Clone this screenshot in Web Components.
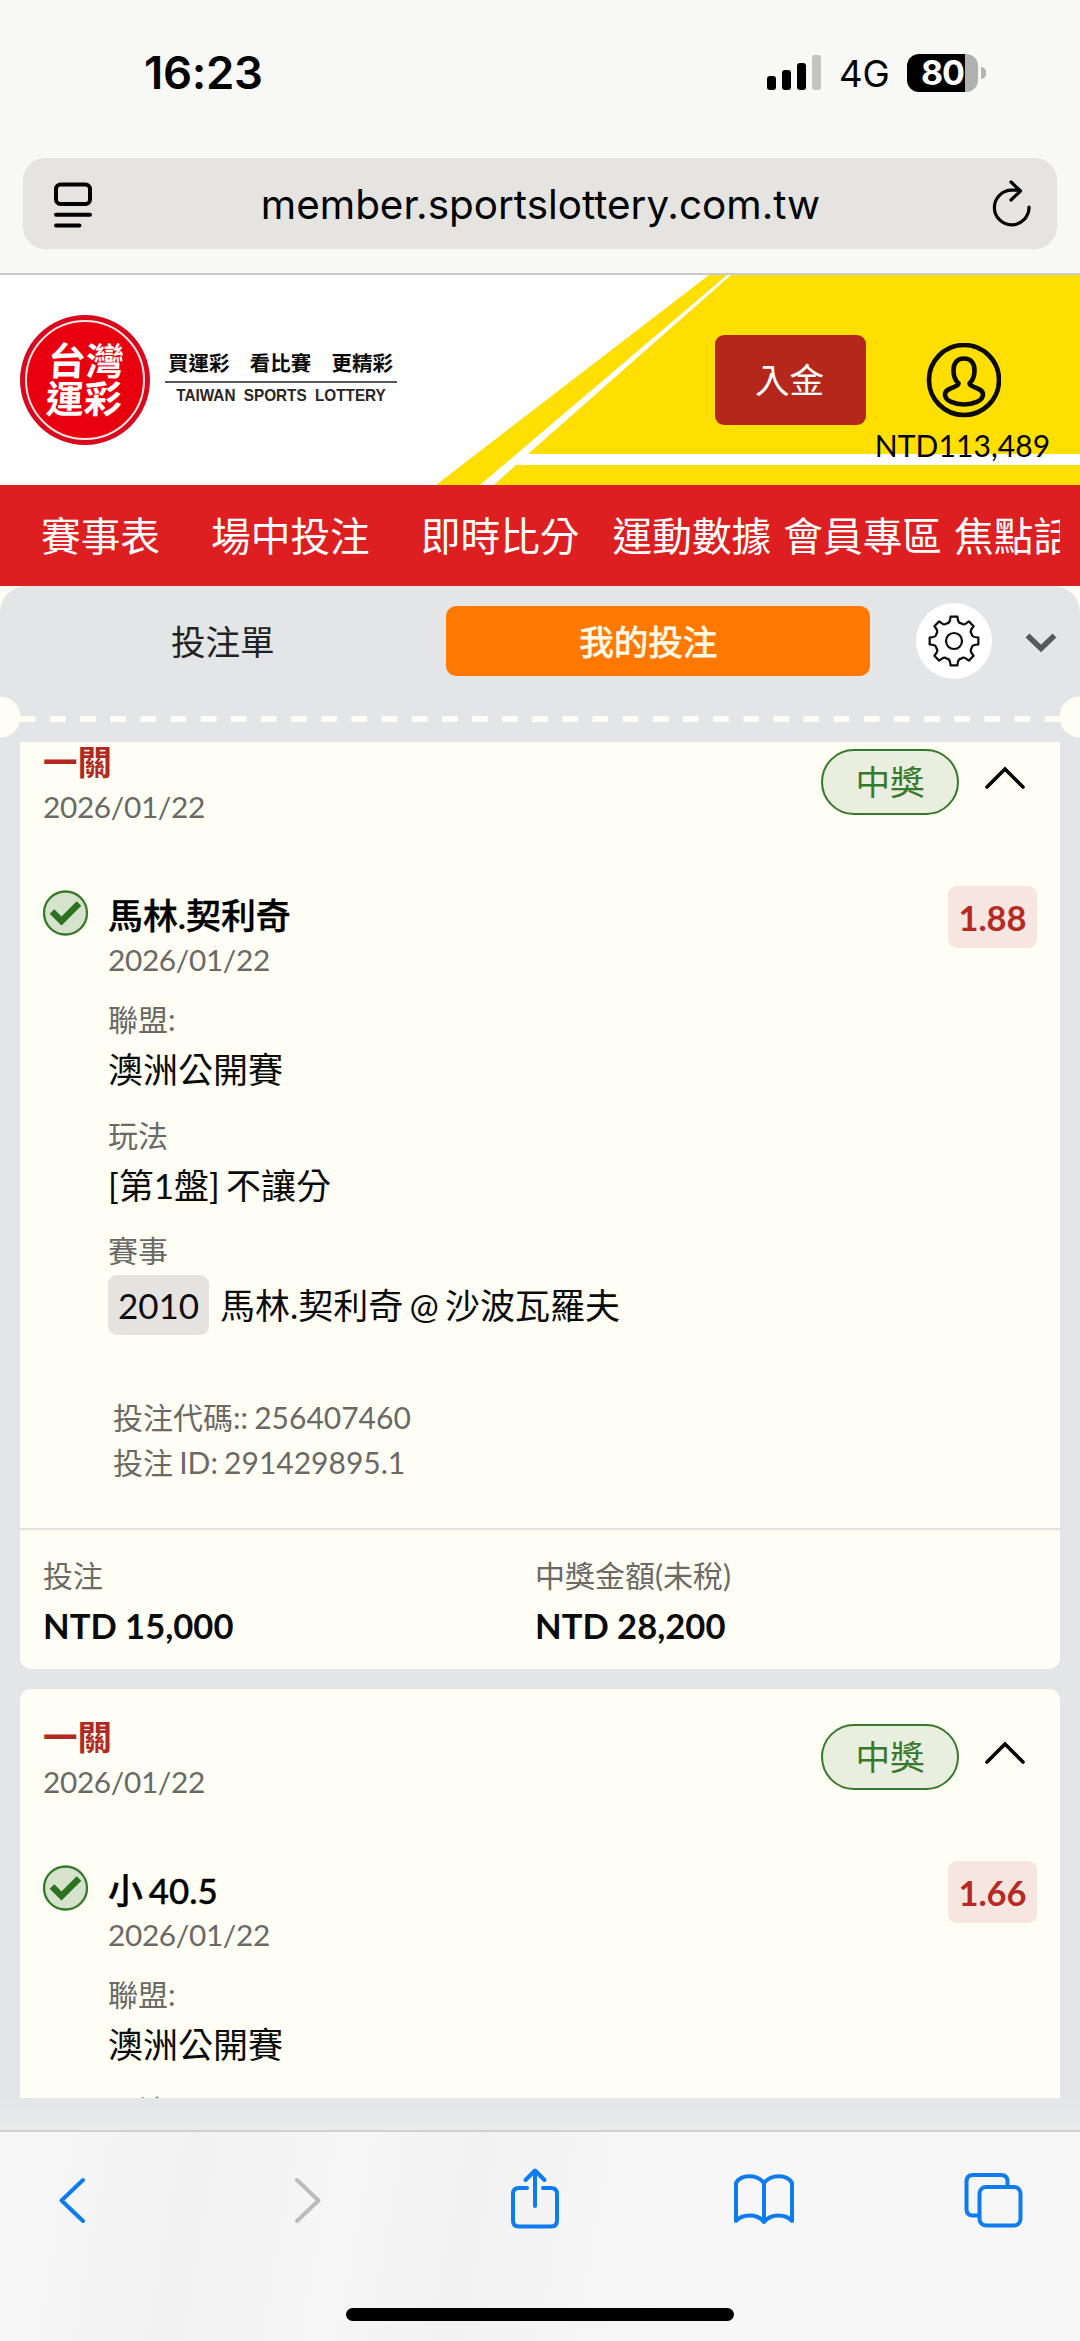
<!DOCTYPE html>
<html lang="zh-Hant">
<head>
<meta charset="utf-8">
<title>台灣運彩</title>
<style>
body{margin:0;width:1080px;height:2341px;overflow:hidden;background:#fffef5;font-family:Lato,"Noto Sans CJK TC",sans-serif;color:#0b0b0b}
</style>
</head>
<body>
<sports-app></sports-app>
<script>
const define=(name,html,setup)=>customElements.define(name,class extends HTMLElement{
  constructor(){
    super();
    const t=document.createElement('template');
    t.innerHTML='<style>:host{display:block;box-sizing:border-box}*{box-sizing:border-box}svg{display:block;flex:none}</style>'+html;
    this.attachShadow({mode:'open'}).append(t.content.cloneNode(true));
    if(setup)setup(this,this.shadowRoot);
  }
});

define('status-bar',`
<style>
:host{height:158px;background:#f8f8f6;font-family:Inter,sans-serif;color:#000}
.row{display:flex;align-items:center;height:145px;padding:0 94px 0 144px}
.time{font-size:45.5px;font-weight:600;letter-spacing:-.3px;flex:1}
.net{font-size:36.5px;margin:2px 18px 0 18px;letter-spacing:0;width:50px;white-space:nowrap}
.bat{display:flex;align-items:center;gap:3px}
.cell{width:71px;height:38px;border-radius:12px;background:linear-gradient(90deg,#000 58px,#b0b0af 58px);color:#fff;font-weight:700;font-size:34px;line-height:38px;text-align:center;letter-spacing:-1px}
.tip{width:5px;height:12px;border-radius:0 5px 5px 0;background:#b4b4b3}
</style>
<div class="row"><span class="time">16:23</span>
<svg width="54" height="35" viewBox="0 0 54 35"><g fill="#000"><rect y="21" width="9" height="14" rx="3"/><rect x="15" y="15" width="9" height="20" rx="3"/><rect x="30" y="8" width="9" height="27" rx="3"/></g><rect x="45" width="9" height="35" rx="3" fill="#c4c4c2"/></svg>
<span class="net">4G</span><span class="bat"><span class="cell">80</span><span class="tip"></span></span></div>`);

define('url-bar',`
<style>
:host{height:117px;background:#f8f8f6;padding:0 23px;border-bottom:2px solid #c9c9cb;font-family:Inter,sans-serif;color:#000}
.box{height:91px;border-radius:22px;background:#e5e4e0;display:flex;align-items:center;justify-content:space-between;padding:0 24px 0 30px}
.url{font-size:40.4px;white-space:nowrap;margin:2px 3px 0 0}
</style>
<div class="box">
<svg width="40" height="48" viewBox="0 0 40 48" fill="none" stroke="#000" stroke-width="4" stroke-linecap="round"><rect x="3" y="4.500" width="34" height="19.500" rx="4.500"/><path d="M3 34.800H37M3 45.500H26.500"/></svg>
<span class="url"><slot></slot></span>
<svg width="42" height="50" viewBox="0 0 42 50" fill="none" stroke="#000" stroke-width="3.2" stroke-linecap="round" stroke-linejoin="round"><path d="M38 28A17.3 17.3 0 1 1 20.7 11.2H28M20 3L29.5 12L20 21"/></svg>
</div>`);

define('brand-logo',`
<style>
:host{display:flex;align-items:center;gap:15px}
.seal{width:130px;height:130px;border-radius:50%;background:#d8091d;padding:5px}
.ring{height:120px;border-radius:50%;border:2px solid #ffe5e5;background:#e8000f;display:flex;align-items:center;justify-content:center;color:#fff;font:700 38px/38px "Noto Sans CJK TC",sans-serif}
.ring span{transform:skewX(-3deg);display:block;text-align:center;white-space:pre;margin-top:-4px}
.tag{width:232px;display:flex;flex-direction:column;margin-top:-6px}
.zh{font:700 20.5px/27px "Noto Sans CJK TC",sans-serif;display:flex;justify-content:space-between;padding:0 4px 0 3px;height:34px;border-bottom:2px solid #555;white-space:nowrap}
.en{font:700 17px/20px "Liberation Sans",sans-serif;text-align:center;margin:3px -10px 0;color:#2b2523;word-spacing:4.5px;white-space:nowrap;transform:scaleX(.9)}
</style>
<div class="seal"><div class="ring"><span>台灣
運彩</span></div></div>
<div class="tag"><div class="zh"><span>買運彩</span><span>看比賽</span><span>更精彩</span></div><div class="en">TAIWAN SPORTS LOTTERY</div></div>`);

define('site-header',`
<style>
:host{height:210px;background:#fff;position:relative}
.bg{position:absolute;inset:0}
.row{position:relative;display:flex;height:210px;align-items:flex-start;justify-content:space-between;padding:40px 31px 0 20px}
.right{display:flex;align-items:flex-start;padding-top:20px}
.pay{width:151px;height:90px;border-radius:9px;background:#b5271a;color:#fff;font-size:34.600px;line-height:90px;text-align:center;padding-right:2px}
.user{width:174px;margin-left:9px;display:flex;flex-direction:column;align-items:center;padding:8px 0 0 1px}
.bal{font-size:30px;line-height:40px;white-space:nowrap;color:#000;margin-top:6px;letter-spacing:.1px}
</style>
<svg class="bg" width="1080" height="210" viewBox="0 0 1080 210"><path d="M709 0H1080V210H436Z" fill="#fedf00"/><path d="M727 0H731L528 179H1080V190H516L494 210H480Z" fill="#fff"/></svg>
<div class="row"><brand-logo></brand-logo><div class="right"><div class="pay">入金</div><div class="user">
<svg width="76" height="76" viewBox="0 0 76 76" fill="none" stroke="#0a0a00" stroke-width="4.6" stroke-linejoin="round"><circle cx="39" cy="37" r="35"/><path transform="translate(1)" d="M38 15.500C31 15.500 27.500 20 27.500 27.500C27.500 33 29 37 32.500 40.500C32.500 44.500 19 44.500 19 51.500C19 58 29 61.500 38 61.500C47 61.500 57 58 57 51.500C57 44.500 43.500 44.500 43.500 40.500C47 37 48.500 33 48.500 27.500C48.500 20 45 15.500 38 15.500Z"/></svg>
<div class="bal">NTD113,489</div></div></div></div>`);

define('main-nav',`
<style>
:host{height:101px;background:#de1f21;padding:0 20px}
nav{display:flex;height:101px;align-items:center;overflow:hidden;padding:0 0 4px 21px;white-space:nowrap;font-size:39.7px;color:#fff}
span{flex:none;margin-right:51px}
.t{margin-right:12px}
.m{margin-right:33px}
</style>
<nav><span>賽事表</span><span>場中投注</span><span class="m">即時比分</span><span class="t">運動數據</span><span class="t">會員專區</span><span>焦點話題</span></nav>`);

define('bet-tabs',`
<style>
:host{height:156px;background:#e4e5e7;border-radius:26px 26px 0 0}
.row{display:flex;height:110px;padding:20px 22px 0 0;align-items:flex-start}
.tab{width:446px;height:70px;line-height:71px;font-size:34.6px;text-align:center;color:#222}
.on{width:425px;border-radius:10px;background:#ff7800;color:#fffbe9;padding-right:19px;-webkit-text-stroke:.8px #fffbe9}
.gear{width:76px;height:76px;border-radius:50%;background:#fff;margin:-3px 32px 0 46px;display:flex;align-items:center;justify-content:center}
.chev{margin-top:22px}
</style>
<div class="row"><div class="tab">投注單</div><div class="tab on">我的投注</div>
<div class="gear"><svg width="56" height="56" viewBox="-28 -28 56 56" fill="none" stroke="#0c0c0c" stroke-width="2.200" stroke-linejoin="round"><path/><circle r="8"/></svg></div>
<svg class="chev" width="34" height="28" viewBox="0 0 34 28" fill="none" stroke="#58595b" stroke-width="5.500"><path d="M3.500 7.500L17 20.500L30.500 7.500"/></svg></div>
<svg width="1080" height="46" viewBox="0 0 1080 46"><g fill="#fffef5"><circle cx="0" cy="21" r="20.500"/><circle cx="1080" cy="21" r="20.500"/></g><path d="M20 23H1061" stroke="#fffef5" stroke-width="6" stroke-dasharray="15.500 14.640"/></svg>`,(h,r)=>{
  const p=(rad,deg)=>{const a=deg*Math.PI/180;return (rad*Math.cos(a)).toFixed(2)+' '+(rad*Math.sin(a)).toFixed(2)};
  let d='';
  for(let i=0;i<8;i++){
    const c=i*45;
    d+=(i?'L':'M')+p(24.6,c-8)+'L'+p(24.6,c+8)+'L'+p(21,c+11)+'Q'+p(18.4,c+15)+' '+p(19,c+22.5)+'Q'+p(18.4,c+30)+' '+p(21,c+34);
  }
  r.querySelector('path').setAttribute('d',d+'Z');
});

define('bet-field',`
<style>
:host{margin-bottom:17.5px}
.l{font-size:30px;line-height:39px;height:40px;color:#6a6966}
.v{font-size:35px;line-height:58px;color:#0b0b0b;white-space:nowrap;word-spacing:-2.700px}
</style><div class="l"><slot name="label"></slot></div><div class="v"><slot></slot></div>`);

define('match-code',`
<style>:host{display:inline-block;height:60px;line-height:61px;width:101px;text-align:center;border-radius:9px;background:#e5e2df;margin:4px 11px 0 0}</style><slot></slot>`);

define('bet-total',`
<style>
:host{width:492px}
.fl{font-size:30px;line-height:45px;color:#6a6966}
.fv{font-size:34.600px;line-height:56px;font-weight:700;white-space:nowrap}
</style><div class="fl"><slot name="label"></slot></div><div class="fv"><slot></slot></div>`);

define('bet-card',`
<style>
:host{height:955px;border-radius:11px;background:#fffef5;flex:none}
.head{display:flex;height:179px;padding:26px 34px 0 23px}
.hd{flex:1}
.kind{font-size:34.500px;line-height:44px;font-weight:700;color:#b02a22}
.date{font-size:29.8px;line-height:45px;color:#6a6966;letter-spacing:-.33px}
.badge{width:138px;height:66px;border:2.5px solid #37792a;border-radius:33px;background:#e9eedf;color:#37792a;font-size:34.6px;line-height:61px;text-align:center;margin:9px 25px 0 0}
.up{margin-top:25px}
.leg{display:flex;padding:0 23px;height:637px;border-bottom:2px solid #e4e2dd;align-items:flex-start}
.ok{margin:-3px 19px 0 0}
.body{flex:1}
.title{font-size:34.900px;line-height:45px;height:44px;font-weight:500;white-space:nowrap;word-spacing:-3px;color:#000;-webkit-text-stroke:.4px #000}
.body .date{margin-bottom:18px}
.odds{width:89px;height:62px;border-radius:9px;background:#f6e6df;color:#b52a24;font-weight:700;font-size:34.500px;line-height:64px;text-align:center;margin-top:-7px}
.codes{font-size:30px;line-height:45px;color:#6a6966;padding:42px 0 0 5px;word-spacing:-1.500px}
.foot{display:flex;padding:23px 23px 0}
</style>
<div class="head"><div class="hd"><div class="kind">一關</div><div class="date">2026/01/22</div></div><div class="badge">中獎</div>
<svg class="up" width="42" height="26" viewBox="0 0 42 26" fill="none" stroke="#000" stroke-width="3.600" stroke-linecap="round"><path d="M3 22L21 4L39 22"/></svg></div>
<div class="leg">
<svg class="ok" width="46" height="46" viewBox="0 0 46 46" fill="none"><circle cx="22.500" cy="23" r="21.500" fill="#d5e2cc" stroke="#37792a" stroke-width="2.300"/><path d="M9 21.500L18.500 31L36 13.500" stroke="#2c7120" stroke-width="6.500"/></svg>
<div class="body"><div class="title"><slot name="title"></slot></div><div class="date">2026/01/22</div><slot></slot><div class="codes"><slot name="codes"></slot></div></div>
<div class="odds"><slot name="odds"></slot></div></div>
<div class="foot"><slot name="total"></slot></div>`);

define('bet-list',`
<style>
:host{height:1390px;background:linear-gradient(#e4e5e7 1355px,#eaebeb);padding:0 20px;border-bottom:2px solid #cfcfd0}
.view{height:1356px;overflow:hidden}
.scroll{display:flex;flex-direction:column;gap:20px;margin-top:-28px}
</style><div class="view"><div class="scroll"><slot></slot></div></div>`);

define('browser-toolbar',`
<style>
:host{height:209px;background:linear-gradient(100deg,#f6f6f6 5%,#f2f2f2 18%,#f6f6f6 32%,#f2f2f2 43%,#f7f7f7 60%,#f6f6f6);display:flex;flex-direction:column;align-items:center;justify-content:space-between;padding:34px 0 20px}
.row{width:100%;display:flex;align-items:center;padding-left:56px;color:#0f7bf0}
.home{width:388px;height:13px;border-radius:7px;background:#000}
svg{fill:none;stroke:currentColor;stroke-width:4;stroke-linecap:round;stroke-linejoin:round}
.fw{color:#bcbcbc;margin-left:206px}
.sh{margin-left:188px}
.bk{margin-left:173px}
.tb{margin-left:168px}
</style>
<div class="row">
<svg width="30" height="66" viewBox="0 0 30 66"><path d="M27 14L5.500 34.500L27 55"/></svg>
<svg class="fw" width="30" height="66" viewBox="0 0 30 66"><path d="M5 14L26.500 34.500L5 55"/></svg>
<svg class="sh" width="50" height="66" viewBox="0 0 50 66"><path d="M17 22H9Q3 22 3 28V54.500Q3 60.500 9 60.500H41Q47 60.500 47 54.500V28Q47 22 41 22H33M25 40V5M15.500 14L25 4.500L34.500 14"/></svg>
<svg class="bk" width="62" height="66" viewBox="0 0 62 66"><path d="M31 17C24 8 8 8 3 17V55C9 48 24 47 31 56C38 47 53 48 59 55V17C54 8 38 8 31 17V56"/></svg>
<svg class="tb" width="60" height="66" viewBox="0 0 60 66"><path d="M15 49.500H10Q3.500 49.500 3.500 43V15.500Q3.500 9 10 9H38Q44.500 9 44.500 15.500V20"/><rect x="16.500" y="21" width="41" height="38.500" rx="6.500"/></svg>
</div><div class="home"></div>`);

define('sports-app',`
<status-bar></status-bar>
<url-bar>member.sportslottery.com.tw</url-bar>
<site-header></site-header>
<main-nav></main-nav>
<bet-tabs></bet-tabs>
<bet-list>
<bet-card><span slot="title">馬林.契利奇</span><span slot="odds">1.88</span>
<bet-field><span slot="label">聯盟:</span>澳洲公開賽</bet-field>
<bet-field><span slot="label">玩法</span>[第1盤] 不讓分</bet-field>
<bet-field><span slot="label">賽事</span><match-code>2010</match-code>馬林.契利奇 @ 沙波瓦羅夫</bet-field>
<div slot="codes">投注代碼:: 256407460</div><div slot="codes">投注 ID: 291429895.1</div>
<bet-total slot="total"><span slot="label">投注</span>NTD 15,000</bet-total>
<bet-total slot="total"><span slot="label">中獎金額(未稅)</span>NTD 28,200</bet-total></bet-card>
<bet-card><span slot="title">小 40.5</span><span slot="odds">1.66</span>
<bet-field><span slot="label">聯盟:</span>澳洲公開賽</bet-field>
<bet-field><span slot="label">玩法</span></bet-field></bet-card>
</bet-list>
<browser-toolbar></browser-toolbar>`);
</script>
</body>
</html>
